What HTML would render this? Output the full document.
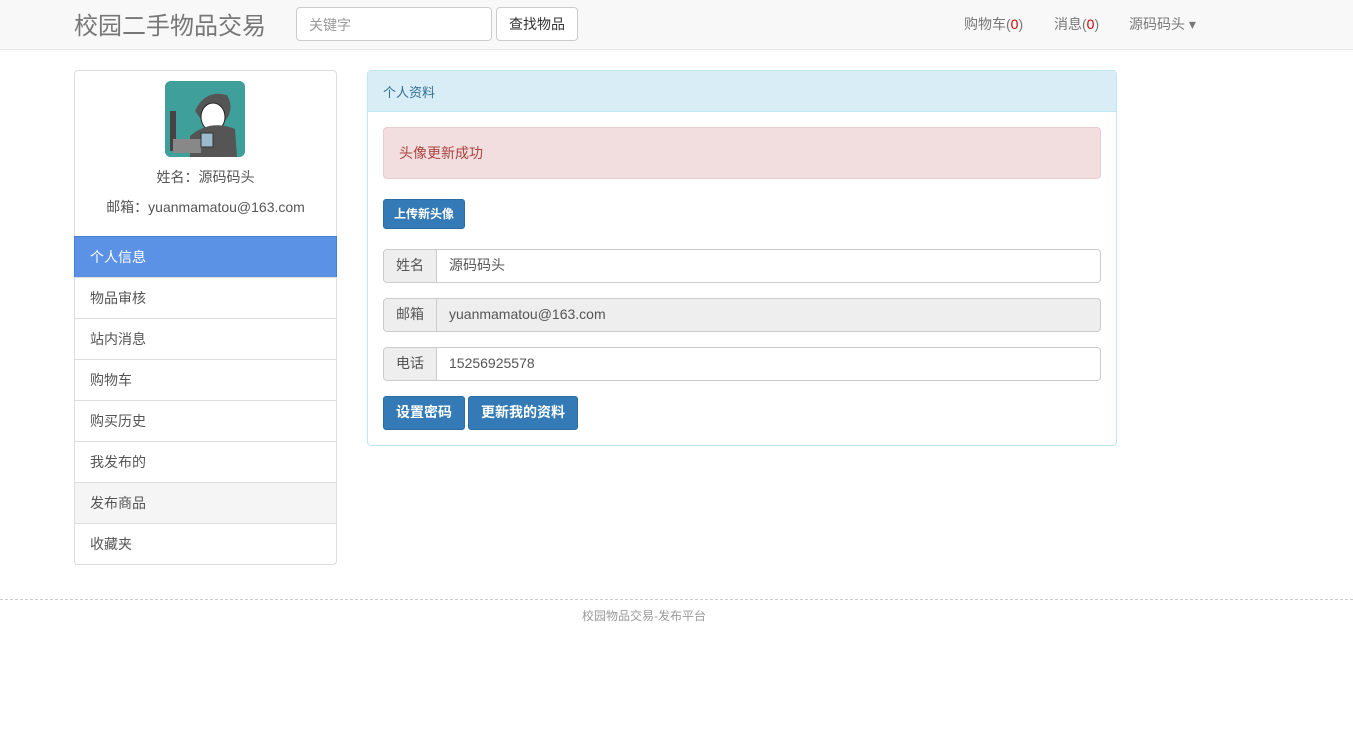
<!DOCTYPE html>
<html><head><meta charset="utf-8"><style>
*{box-sizing:border-box;margin:0;padding:0}
body{width:1353px;height:742px;background:#fff;font-family:"Liberation Sans","Noto Sans CJK SC",sans-serif;font-size:14px;color:#333;position:relative;overflow:hidden}
.nav{position:absolute;left:0;top:0;width:1353px;height:50px;background:#f8f8f8;border-bottom:1px solid #e7e7e7}
.brand{position:absolute;left:74px;top:6px;font-size:24px;color:#777}
.search{position:absolute;left:296px;top:7px;width:196px;height:34px;border:1px solid #ccc;border-radius:4px;background:#fff;padding:7px 12px;color:#999;font-size:14px}
.sbtn{position:absolute;left:496px;top:7px;width:82px;height:34px;border:1px solid #ccc;border-radius:4px;background:#fff;text-align:center;line-height:32px}
.nr{position:absolute;top:14px;color:#777}
.nr b{color:#c00;font-weight:normal}
.side{position:absolute;left:74px;top:70px;width:263px;height:495px;border:1px solid #ddd;border-radius:4px}
.av{position:absolute;left:90px;top:10px;width:80px;height:76px;border-radius:6px;background:#3a9e9c;overflow:hidden}
.info{position:absolute;width:261px;text-align:center;color:#555;top:0}
.item{position:absolute;left:-1px;width:263px;height:42px;border:1px solid #ddd;padding:10px 15px;color:#555;background:#fff}
.panel{position:absolute;left:367px;top:70px;width:750px;height:376px;border:1px solid #bce8f1;border-radius:4px}
.ph{height:41px;background:#d9edf7;border-bottom:1px solid #bce8f1;padding:11px 15px;font-size:13px;color:#31708f}
.alert{position:absolute;left:15px;top:56px;width:718px;height:52px;background:#f2dede;border:1px solid #ebccd1;border-radius:4px;color:#a94442;padding:15px 15px}
.btn{position:absolute;background:#337ab7;border:1px solid #2e6da4;border-radius:3px;color:#fff;text-align:center;font-weight:bold}
.ig{position:absolute;left:15px;width:718px;height:34px;border:1px solid #ccc;border-radius:4px;overflow:hidden}
.ig .l{position:absolute;left:0;top:0;width:53px;height:32px;background:#eee;border-right:1px solid #ccc;text-align:center;line-height:31px;color:#555}
.ig .v{position:absolute;left:65px;top:0;line-height:31px;color:#555}
.foot{position:absolute;left:0;top:599px;width:1353px;border-top:1px dashed #ccc;font-size:12px;color:#999;padding-top:7px;padding-left:582px}
</style></head><body>
<div class="nav">
<div class="brand">校园二手物品交易</div>
<div class="search">关键字</div>
<div class="sbtn">查找物品</div>
<div class="nr" style="left:964px">购物车(<b>0</b>)</div>
<div class="nr" style="left:1054px">消息(<b>0</b>)</div>
<div class="nr" style="left:1129px">源码码头 ▾</div>
</div>
<div class="side">
<div class="av"><svg width="80" height="76"><rect width="80" height="76" fill="#3f9f9b"/><path d="M30 30 Q40 8 62 14 Q70 28 60 40 L40 44Z" fill="#555"/><ellipse cx="48" cy="36" rx="12" ry="14" fill="#fff" stroke="#222"/><path d="M25 55 Q45 38 70 48 L72 76 L25 76Z" fill="#555"/><rect x="5" y="30" width="6" height="40" fill="#444"/><rect x="8" y="58" width="28" height="14" fill="#888"/><rect x="36" y="52" width="12" height="14" fill="#9bc" stroke="#333"/></svg></div>
<div class="info" style="top:96px">姓名：源码码头</div>
<div class="info" style="top:126px">邮箱：yuanmamatou@163.com</div>
<div class="item" style="top:165px;background:#5b92e5;border-color:#4a7fd0;color:#fff">个人信息</div>
<div class="item" style="top:206px">物品审核</div>
<div class="item" style="top:247px">站内消息</div>
<div class="item" style="top:288px">购物车</div>
<div class="item" style="top:329px">购买历史</div>
<div class="item" style="top:370px">我发布的</div>
<div class="item" style="top:411px;background:#f5f5f5">发布商品</div>
<div class="item" style="top:452px;border-radius:0 0 4px 4px">收藏夹</div>
</div>
<div class="panel">
<div class="ph">个人资料</div>
<div class="alert">头像更新成功</div>
<div class="btn" style="left:15px;top:128px;width:82px;height:30px;line-height:28px;font-size:12px">上传新头像</div>
<div class="ig" style="top:178px"><div class="l">姓名</div><div class="v">源码码头</div></div>
<div class="ig" style="top:227px;background:#eee"><div class="l">邮箱</div><div class="v">yuanmamatou@163.com</div></div>
<div class="ig" style="top:276px"><div class="l">电话</div><div class="v">15256925578</div></div>
<div class="btn" style="left:15px;top:325px;width:82px;height:34px;line-height:31px">设置密码</div>
<div class="btn" style="left:100px;top:325px;width:110px;height:34px;line-height:31px">更新我的资料</div>
</div>
<div class="foot">校园物品交易-发布平台</div>
</body></html>
